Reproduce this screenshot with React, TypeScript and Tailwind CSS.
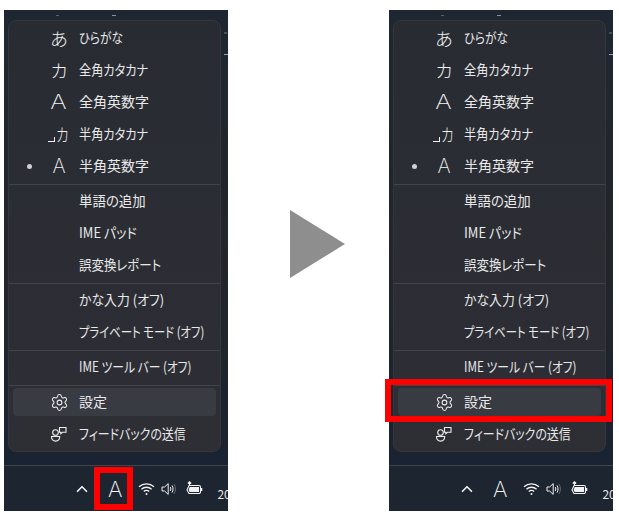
import { ChevronUp, Settings } from "lucide-react";

type Row = { label: string; icon?: React.ReactNode; dot?: boolean; squeeze?: string };

function Glyph({ children, className = "" }: { children: React.ReactNode; className?: string }) {
  return <span className={`text-[#f4f4f4] leading-none ${className}`}>{children}</span>;
}

function FeedbackIcon() {
  return (
    <svg width="18" height="18" viewBox="0 0 18 18" fill="none" stroke="#eeeeee" strokeWidth="1.1">
      <path d="M9.5 2.5h6.5v4.8h-3.6l-1.6 1.5v-1.5h-1.3z" />
      <circle cx="5.5" cy="7.5" r="2.8" />
      <path d="M1.5 11.5h8.2c0 3-1.6 4.6-4.1 4.6s-4.1-1.6-4.1-4.6z" />
    </svg>
  );
}

function WifiIcon() {
  return (
    <svg width="17" height="14" viewBox="0 0 17 14" fill="none" stroke="#f2f2f2" strokeWidth="1.3">
      <path d="M1 4.8c4.2-3.8 10.8-3.8 15 0" />
      <path d="M3.4 7.2c2.9-2.6 7.3-2.6 10.2 0" />
      <path d="M5.8 9.6c1.5-1.4 3.9-1.4 5.4 0" />
      <circle cx="8.5" cy="12" r="1" fill="#f2f2f2" stroke="none" />
    </svg>
  );
}

function SpeakerIcon() {
  return (
    <svg width="16" height="14" viewBox="0 0 16 14" fill="none" stroke="#f2f2f2" strokeWidth="1">
      <path d="M1 5h2.6L7.2 1.6v10.8L3.6 9H1z" />
      <path d="M9.2 5c.8 1.2.8 2.8 0 4" />
      <path d="M11 3.4c1.4 2 1.4 5.2 0 7.2" />
      <path d="M13 2c1.9 2.9 1.9 7.1 0 10" stroke="#666a70" />
    </svg>
  );
}

function BatteryIcon() {
  return (
    <svg width="17" height="15" viewBox="0 0 17 15" fill="none" stroke="#f2f2f2" strokeWidth="1.1">
      <path d="M3 4.5h10a1.5 1.5 0 0 1 1.5 1.5v5a1.5 1.5 0 0 1-1.5 1.5H3L1 9z" />
      <path d="M3.6 6h9.4v5H3.6L2.6 9z" fill="#f2f2f2" stroke="none" />
      <path d="M15.5 7v3" strokeWidth="1.6" />
      <path d="M3.5 0.8v4M1.8 2.5 3.5 0.8 5.2 2.5" strokeWidth="1.1" />
    </svg>
  );
}

function HalfKana() {
  return (
    <span className="flex items-end ml-[-3px]">
      <span className="w-[7px] h-[5px] border-b border-r border-[#f0f0f0] mb-[1px] shrink-0" />
      <Glyph className="text-[18px] font-light ml-[1px] scale-x-[0.75] origin-left w-[11px]">カ</Glyph>
    </span>
  );
}

function MenuRow({ label, icon, dot, active, squeeze = "" }: Row & { active?: boolean }) {
  return (
    <div className="flex items-center h-[32px]">
      <div
        className={`flex items-center h-[28px] w-full mx-[4px] rounded-[4px] ${active ? "bg-[#393b43]" : ""}`}
      >
        <div className="w-[13px] ml-[10px] flex justify-center shrink-0">
          {dot && <span className="w-[5px] h-[5px] rounded-full bg-[#d0d0d0]" />}
        </div>
        <div className="w-[26px] ml-[10px] flex justify-center items-center shrink-0">{icon}</div>
        <span className={`ml-[7px] mb-[2px] origin-left text-[14px] text-[#e9e9e9] whitespace-nowrap shrink-0 ${squeeze}`}>
          {label}
        </span>
      </div>
    </div>
  );
}

function Divider() {
  return <div className="h-px bg-[#424449]" />;
}

function Shot({ boxA, boxSetting }: { boxA?: boolean; boxSetting?: boolean }) {
  const a = <Glyph className="text-[20px] font-['Inter'] font-extralight">A</Glyph>;
  const wideA = <Glyph className="text-[20px] font-['Inter'] font-extralight scale-x-[1.25]">A</Glyph>;
  return (
    <div className="relative flex flex-col w-[224px] h-[501px] bg-gradient-to-b from-[#1e2731] via-[#232529] to-[#172233]">
      {/* wallpaper specks peeking round the flyout */}
      <span className="absolute left-[108px] top-[5px] w-[4px] h-px bg-[#8a9097]" />
      <span className="absolute left-[52px] top-[5px] w-[3px] h-px bg-[#5b6168]" />
      <span className="absolute left-[220px] top-[44px] w-[4px] h-px bg-[#9aa4b0]" />
      <span className="absolute left-[220px] top-[22px] w-[3px] h-[2px] bg-[#4a5058]" />
      <div className="h-[455px] pt-[10px] pl-[4px]">
        <div className="relative w-[213px] h-[432px] pt-[1px] rounded-[8px] border border-[#35373c] bg-gradient-to-b from-[#282c32] to-[#2e2e35]">
          <MenuRow label="ひらがな" squeeze="scale-x-[0.83]" icon={<Glyph className="text-[18px] font-light">あ</Glyph>} />
          <MenuRow label="全角カタカナ" squeeze="scale-x-[0.87]" icon={<Glyph className="text-[18px] font-light">カ</Glyph>} />
          <MenuRow label="全角英数字" icon={wideA} />
          <MenuRow label="半角カタカナ" squeeze="scale-x-[0.87]" icon={<HalfKana />} />
          <MenuRow label="半角英数字" icon={a} dot />
          <div className="mt-[2px]"><Divider /></div>
          <MenuRow label="単語の追加" squeeze="scale-x-[0.96]" />
          <MenuRow label="IME パッド" squeeze="scale-x-[0.93]" />
          <MenuRow label="誤変換レポート" squeeze="scale-x-[0.89]" />
          <div className="mt-[2px]"><Divider /></div>
          <MenuRow label="かな入力 (オフ)" squeeze="scale-x-[0.92]" />
          <MenuRow label="プライベート モード (オフ)" squeeze="scale-x-[0.81]" />
          <div className="mt-[2px]"><Divider /></div>
          <MenuRow label="IME ツール バー (オフ)" squeeze="scale-x-[0.84]" />
          <div className="mt-[2px]"><Divider /></div>
          <MenuRow label="設定" active icon={<Settings size={19} strokeWidth={1.3} color="#eeeeee" />} />
          <MenuRow label="フィードバックの送信" squeeze="scale-x-[0.85]" icon={<FeedbackIcon />} />
        </div>
      </div>
      <div className="flex items-center h-[46px] border-t border-[#3f454b] bg-[#1c2530] overflow-hidden">
        <ChevronUp size={18} strokeWidth={2.2} color="#f2f2f2" className="ml-[69px] shrink-0" />
        <Glyph className="ml-[17px] shrink-0 text-[22px] font-['Inter'] font-extralight">A</Glyph>
        <span className="ml-[16px] shrink-0"><WifiIcon /></span>
        <span className="ml-[6px] shrink-0"><SpeakerIcon /></span>
        <span className="ml-[9px] shrink-0"><BatteryIcon /></span>
        <span className="ml-[14px] mt-[10px] shrink-0 text-[12px] text-[#e8e8e8]">20</span>
      </div>
      {boxA && <div className="absolute left-[90px] top-[457px] w-[39px] h-[43px] border-[6px] border-[#ff0000]" />}
      {boxSetting && <div className="absolute left-[-4px] top-[369px] w-[227px] h-[43px] border-[6px] border-[#ff0000]" />}
    </div>
  );
}

export default function App() {
  return (
    <div className="w-[619px] h-[520px] bg-white pt-[10px] pl-[4px] flex items-start font-['Noto_Sans_CJK_JP','Liberation_Sans',sans-serif] [font-feature-settings:'palt'] overflow-hidden">
      <Shot boxA />
      <div className="ml-[62px] mt-[200px] w-0 h-0 border-y-[34px] border-y-transparent border-l-[55px] border-l-[#8e8e8e]" />
      <div className="ml-[44px]">
        <Shot boxSetting />
      </div>
    </div>
  );
}
